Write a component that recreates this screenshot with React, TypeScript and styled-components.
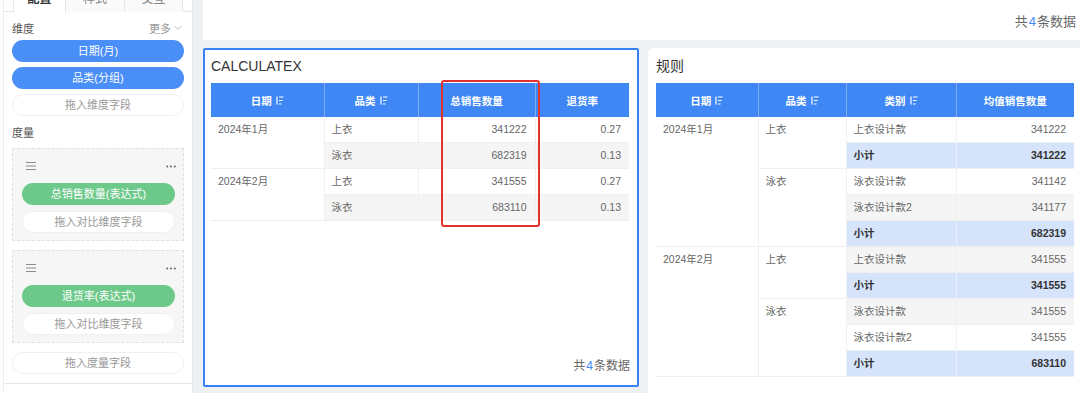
import React from "react";
import styled, { createGlobalStyle } from "styled-components";
import { ChevronDown } from "lucide-react";

const GlobalStyle = createGlobalStyle`
  html, body {
    margin: 0;
    padding: 0;
    height: 393px;
    overflow: hidden;
    background: #eef1f4;
  }
  body {
    font-family: "Liberation Sans", "Noto Sans CJK SC", sans-serif;
  }
  * { box-sizing: border-box; }
`;

type Tone = "white" | "stripe" | "subtotal";

const tones: Record<Tone, string> = {
  white: "#ffffff",
  stripe: "#f5f5f5",
  subtotal: "#d6e4fb",
};

const leftRows = [
  { date: "2024年1月", cat: "上衣", qty: "341222", rate: "0.27" },
  { cat: "泳衣", qty: "682319", rate: "0.13" },
  { date: "2024年2月", cat: "上衣", qty: "341555", rate: "0.27" },
  { cat: "泳衣", qty: "683110", rate: "0.13" },
];

type RuleRow = {
  date?: string;
  dateSpan?: number;
  cat?: string;
  catSpan?: number;
  kind: string;
  value: string;
  subtotal?: boolean;
};

const ruleRows: RuleRow[] = [
  { date: "2024年1月", dateSpan: 5, cat: "上衣", catSpan: 2, kind: "上衣设计款", value: "341222" },
  { kind: "小计", value: "341222", subtotal: true },
  { cat: "泳衣", catSpan: 3, kind: "泳衣设计款", value: "341142" },
  { kind: "泳衣设计款2", value: "341177" },
  { kind: "小计", value: "682319", subtotal: true },
  { date: "2024年2月", dateSpan: 5, cat: "上衣", catSpan: 2, kind: "上衣设计款", value: "341555" },
  { kind: "小计", value: "341555", subtotal: true },
  { cat: "泳衣", catSpan: 3, kind: "泳衣设计款", value: "341555" },
  { kind: "泳衣设计款2", value: "341555" },
  { kind: "小计", value: "683110", subtotal: true },
];

const SortIcon = () => (
  <svg width="8" height="9" viewBox="0 0 8 9" fill="none" stroke="#fff" strokeWidth="1.2">
    <path d="M1 0.5V8.5" />
    <path d="M3 1H7.5M3 4.5H6.5M3 8H5.5" />
  </svg>
);

const MenuIcon = () => (
  <svg width="10" height="8" viewBox="0 0 10 8" fill="none" stroke="#8a8a8a" strokeWidth="1">
    <path d="M0 0.5H10M0 4H10M0 7.5H10" />
  </svg>
);

const DotsIcon = () => (
  <svg width="10" height="3" viewBox="0 0 10 3" fill="#666">
    <circle cx="1.2" cy="1.5" r="1" />
    <circle cx="5" cy="1.5" r="1" />
    <circle cx="8.8" cy="1.5" r="1" />
  </svg>
);

const Total = ({ size }: { size: number }) => (
  <TotalText $size={size}>
    共<em>4</em>条数据
  </TotalText>
);

export default function App() {
  return (
    <>
      <GlobalStyle />
      <Page>
        <Sidebar>
          <Panel>
            <TabBar>
              <Tab $active $width={53}>配置</Tab>
              <Tab $width={59}>样式</Tab>
              <Tab $width={58}>交互</Tab>
            </TabBar>
            <PanelBody>
              <SectionHead $after={4}>
                <span>维度</span>
                <More>
                  更多
                  <ChevronDown size={12} strokeWidth={1.4} />
                </More>
              </SectionHead>
              <Pill $tone="blue">日期(月)</Pill>
              <Pill $tone="blue">品类(分组)</Pill>
              <DropZone>拖入维度字段</DropZone>

              <SectionHead $after={8}>
                <span>度量</span>
              </SectionHead>
              <MeasureCard>
                <MeasureTop>
                  <MenuIcon />
                  <DotsIcon />
                </MeasureTop>
                <Pill $tone="green">总销售数量(表达式)</Pill>
                <DropZone>拖入对比维度字段</DropZone>
              </MeasureCard>
              <MeasureCard>
                <MeasureTop>
                  <MenuIcon />
                  <DotsIcon />
                </MeasureTop>
                <Pill $tone="green">退货率(表达式)</Pill>
                <DropZone>拖入对比维度字段</DropZone>
              </MeasureCard>
              <DropZone>拖入度量字段</DropZone>
            </PanelBody>
            <PanelRule />
          </Panel>
        </Sidebar>

        <Main>
          <TopBar>
            <Total size={13} />
          </TopBar>
          <Cards>
            <CalcCard>
              <CardTitle>CALCULATEX</CardTitle>
              <Table>
                <colgroup>
                  <col style={{ width: 113 }} />
                  <col style={{ width: 94 }} />
                  <col style={{ width: 117 }} />
                  <col style={{ width: 94 }} />
                </colgroup>
                <thead>
                  <tr>
                    <Th>
                      <HeadLabel>日期<SortIcon /></HeadLabel>
                    </Th>
                    <Th>
                      <HeadLabel>品类<SortIcon /></HeadLabel>
                    </Th>
                    <Th>总销售数量</Th>
                    <Th>退货率</Th>
                  </tr>
                </thead>
                <tbody>
                  {leftRows.map((r, i) => {
                    const tone: Tone = i % 2 ? "stripe" : "white";
                    return (
                      <tr key={i}>
                        {r.date && (
                          <Td rowSpan={2} $tone="white" $top>
                            {r.date}
                          </Td>
                        )}
                        <Td $tone={tone}>{r.cat}</Td>
                        <Td $tone={tone} $right>{r.qty}</Td>
                        <Td $tone={tone} $right>{r.rate}</Td>
                      </tr>
                    );
                  })}
                </tbody>
              </Table>
              <Highlight />
              <CardFooter>
                <Total size={12} />
              </CardFooter>
            </CalcCard>

            <RuleCard>
              <CardTitle>规则</CardTitle>
              <Table>
                <colgroup>
                  <col style={{ width: 102 }} />
                  <col style={{ width: 88 }} />
                  <col style={{ width: 110 }} />
                  <col style={{ width: 118 }} />
                </colgroup>
                <thead>
                  <tr>
                    <Th>
                      <HeadLabel>日期<SortIcon /></HeadLabel>
                    </Th>
                    <Th>
                      <HeadLabel>品类<SortIcon /></HeadLabel>
                    </Th>
                    <Th>
                      <HeadLabel>类别<SortIcon /></HeadLabel>
                    </Th>
                    <Th>均值销售数量</Th>
                  </tr>
                </thead>
                <tbody>
                  {ruleRows.map((r, i) => {
                    const tone: Tone = r.subtotal ? "subtotal" : i % 2 ? "stripe" : "white";
                    return (
                      <tr key={i}>
                        {r.date && (
                          <Td rowSpan={r.dateSpan} $tone="white" $top>
                            {r.date}
                          </Td>
                        )}
                        {r.cat && (
                          <Td rowSpan={r.catSpan} $tone="white" $top>
                            {r.cat}
                          </Td>
                        )}
                        <Td $tone={tone} $bold={r.subtotal}>{r.kind}</Td>
                        <Td $tone={tone} $bold={r.subtotal} $right>
                          {r.value}
                        </Td>
                      </tr>
                    );
                  })}
                </tbody>
              </Table>
            </RuleCard>
          </Cards>
        </Main>
      </Page>
    </>
  );
}

const Page = styled.div`
  display: flex;
  height: 393px;
  overflow: hidden;
`;

const Sidebar = styled.aside`
  flex: none;
  width: 193px;
  height: 100%;
  background: #fff;
  border-right: 1px solid #e4e7ea;
  padding-left: 3px;
`;

const Panel = styled.div`
  height: 100%;
  border-left: 1px solid #ececec;
  display: flex;
  flex-direction: column;
`;

const TabBar = styled.div`
  flex: none;
  display: flex;
  height: 26px;
  margin-top: -14px;
  padding-left: 9px;
  border-bottom: 1px solid #e6e6e6;
`;

const Tab = styled.div<{ $active?: boolean; $width: number }>`
  width: ${(p) => p.$width}px;
  line-height: 26px;
  text-align: center;
  font-size: 12px;
  color: ${(p) => (p.$active ? "#333" : "#888")};
  font-weight: ${(p) => (p.$active ? 700 : 400)};
  background: ${(p) => (p.$active ? "#fff" : "#fafafa")};
  border-left: ${(p) => (p.$active ? "1px solid #e6e6e6" : "none")};
  border-right: 1px solid #e6e6e6;
  margin-bottom: ${(p) => (p.$active ? "-1px" : "0")};
  height: ${(p) => (p.$active ? "27px" : "26px")};
`;

const PanelBody = styled.div`
  flex: none;
  padding: 0 8px;
  display: flex;
  flex-direction: column;
`;

const SectionHead = styled.div<{ $after: number }>`
  flex: none;
  display: flex;
  justify-content: space-between;
  align-items: center;
  height: 16px;
  margin-top: 8px;
  margin-bottom: ${(p) => p.$after}px;
  font-size: 11px;
  color: #555;
`;

const More = styled.span`
  display: flex;
  align-items: center;
  gap: 1px;
  color: #999;
  font-size: 11px;
  svg {
    color: #999;
  }
`;

const Pill = styled.div<{ $tone: "blue" | "green" }>`
  flex: none;
  height: 22px;
  line-height: 22px;
  border-radius: 11px;
  text-align: center;
  font-size: 11px;
  color: #fff;
  background: ${(p) => (p.$tone === "blue" ? "#4a8ef7" : "#6dc98a")};
  margin-bottom: ${(p) => (p.$tone === "blue" ? 5 : 6)}px;
`;

const DropZone = styled.div`
  flex: none;
  height: 22px;
  line-height: 20px;
  border-radius: 11px;
  border: 1px solid #f0f0f0;
  background: #fff;
  text-align: center;
  font-size: 11px;
  color: #999;
`;

const MeasureCard = styled.div`
  flex: none;
  height: 93px;
  background: #f6f6f6;
  border: 1px dashed #e1e1e1;
  padding: 10px 8px 0 9px;
  margin-bottom: 9px;
  display: flex;
  flex-direction: column;
`;

const MeasureTop = styled.div`
  display: flex;
  justify-content: space-between;
  align-items: center;
  height: 14px;
  padding: 0 0 0 4px;
  margin-bottom: 10px;
  margin-right: -1px;
`;

const PanelRule = styled.div`
  flex: none;
  margin-top: 9px;
  border-top: 1px solid #e6e6e6;
`;

const Main = styled.main`
  flex: 1;
  min-width: 0;
  padding-left: 10px;
  display: flex;
  flex-direction: column;
`;

const TopBar = styled.div`
  flex: none;
  height: 40px;
  background: #fff;
  display: flex;
  justify-content: flex-end;
  align-items: center;
  padding-right: 4px;
`;

const TotalText = styled.span<{ $size: number }>`
  font-size: ${(p) => p.$size}px;
  color: #666;
  em {
    font-style: normal;
    color: #3e87f5;
    padding: 0 1px;
  }
`;

const Cards = styled.div`
  flex: none;
  display: flex;
  gap: 9px;
  margin-top: 8px;
  align-items: flex-start;
`;

const CalcCard = styled.section`
  position: relative;
  flex: none;
  width: 436px;
  height: 339px;
  background: #fff;
  border: 2px solid #3b80f2;
  border-radius: 2px;
  padding: 8px 7px 0 6px;
  display: flex;
  flex-direction: column;
`;

const RuleCard = styled.section`
  flex: 1;
  height: 360px;
  background: #fff;
  border-radius: 6px 0 0 0;
  padding: 10px 8px 0 8px;
`;

const CardTitle = styled.h2`
  margin: 0 0 9px;
  height: 16px;
  line-height: 16px;
  font-size: 14px;
  font-weight: 400;
  color: #333;
`;

const Table = styled.table`
  width: 418px;
  border-collapse: collapse;
  table-layout: fixed;
`;

const Th = styled.th`
  height: 34px;
  padding: 0;
  background: #3e87f5;
  color: #fff;
  font-size: 10.5px;
  font-weight: 700;
  text-align: center;
  border-right: 1px solid #7eacf5;
  &:last-child {
    border-right: none;
  }
`;

const HeadLabel = styled.span`
  display: inline-flex;
  align-items: center;
  gap: 4px;
`;

const Td = styled.td<{ $tone: Tone; $right?: boolean; $top?: boolean; $bold?: boolean }>`
  height: 25px;
  padding: 0 8px 0 7px;
  font-size: 10.5px;
  color: ${(p) => (p.$bold ? "#333" : "#666")};
  font-weight: ${(p) => (p.$bold ? 700 : 400)};
  background: ${(p) => tones[p.$tone]};
  text-align: ${(p) => (p.$right ? "right" : "left")};
  vertical-align: ${(p) => (p.$top ? "top" : "middle")};
  line-height: 25px;
  border-bottom: 1px solid #efefef;
  border-right: 1px solid ${(p) => (p.$tone === "subtotal" ? "#eaf1fd" : "#f0f0f0")};
  &:last-child {
    border-right: none;
  }
`;

const Highlight = styled.div`
  position: absolute;
  left: 236px;
  top: 30px;
  width: 99px;
  height: 147px;
  border: 2px solid #e3312d;
  border-radius: 3px;
  pointer-events: none;
`;

const CardFooter = styled.div`
  margin-top: auto;
  padding-bottom: 11px;
  text-align: right;
  line-height: 16px;
`;
